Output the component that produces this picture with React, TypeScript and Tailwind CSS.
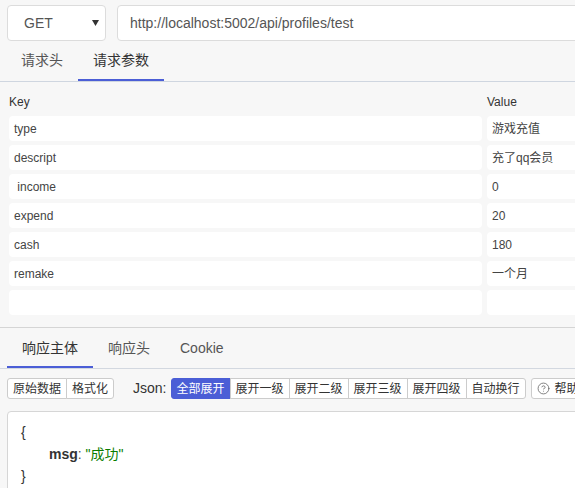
import { CircleHelp } from "lucide-react";
import clsx from "clsx";

const params = [
  { key: "type", value: "游戏充值" },
  { key: "descript", value: "充了qq会员" },
  { key: " income", value: "0" },
  { key: "expend", value: "20" },
  { key: "cash", value: "180" },
  { key: "remake", value: "一个月" },
  { key: "", value: "" },
];

const expandButtons = ["全部展开", "展开一级", "展开二级", "展开三级", "展开四级", "自动换行"];

function Tab({ label, active }: { label: string; active?: boolean }) {
  return (
    <div
      className={clsx(
        "flex items-center px-[15px] text-[14px] border-b-2",
        active ? "border-[#4b5ed6] text-[#333]" : "border-transparent text-[#555]"
      )}
    >
      {label}
    </div>
  );
}

export default function App() {
  return (
    <div
      className="w-[575px] h-[488px] overflow-hidden bg-[#f7f7f7] text-[#333]"
      style={{ fontFamily: '"Liberation Sans", Arial, "Noto Sans CJK SC", sans-serif' }}
    >
      {/* Request line */}
      <div className="flex pl-[7px] pt-[5px] w-[620px]">
        <div className="flex items-center justify-between w-[99px] h-[36px] bg-white border border-[#dcdcdc] rounded-[4px] pl-[16px] pr-[6px] text-[14px] text-[#555]">
          <span>GET</span>
          <svg width="7" height="6" viewBox="0 0 7 6">
            <path d="M0 0h7L3.5 6z" fill="#333" />
          </svg>
        </div>
        <div className="flex items-center flex-1 ml-[11px] h-[36px] bg-white border border-[#dcdcdc] rounded-[4px] pl-[12px] text-[14px] text-[#555]">
          http://localhost:5002/api/profiles/test
        </div>
      </div>

      {/* Request tabs */}
      <div className="flex h-[41px] pl-[6px] border-b border-[#cfd6e0]">
        <Tab label="请求头" />
        <Tab label="请求参数" active />
      </div>

      {/* Params table */}
      <div className="pl-[9px] pb-[12px] border-b border-[#d5d5d5] text-[12px]">
        <div className="grid grid-cols-[473px_100px] gap-x-[5px] pt-[12px] pb-[6px] leading-[16px] text-[#333]">
          <span>Key</span>
          <span>Value</span>
        </div>
        <div className="flex flex-col gap-[4px]">
          {params.map((p, i) => (
            <div key={i} className="grid grid-cols-[473px_100px] gap-x-[5px] h-[25px]">
              <div className="flex items-center bg-white rounded-[4px] pl-[5px] text-[#444] whitespace-pre">
                {p.key}
              </div>
              <div className="flex items-center bg-white rounded-[4px] pl-[5px] text-[#444]">
                {p.value}
              </div>
            </div>
          ))}
        </div>
      </div>

      {/* Response tabs */}
      <div className="flex h-[41px] pt-[2px] pl-[7px] border-b border-[#d3d8e0]">
        <Tab label="响应主体" active />
        <Tab label="响应头" />
        <Tab label="Cookie" />
      </div>

      {/* Toolbar */}
      <div className="flex items-center w-[640px] pl-[7px] mt-[9px] h-[21px] text-[12px] whitespace-nowrap">
        <div className="flex shrink-0 h-full">
          <button className="h-full px-[5px] bg-white border border-[#ccc] rounded-l-[3px] text-[#333]">原始数据</button>
          <button className="h-full px-[5px] -ml-px bg-white border border-[#ccc] rounded-r-[3px] text-[#333]">格式化</button>
        </div>
        <span className="shrink-0 ml-[19px] text-[14px] text-[#333]">Json:</span>
        <div className="flex shrink-0 h-full ml-[4px]">
          {expandButtons.map((b, i) => (
            <button
              key={b}
              className={clsx(
                "h-full px-[5px] border",
                i > 0 && "-ml-px",
                i === 0 && "rounded-l-[3px]",
                i === expandButtons.length - 1 && "rounded-r-[3px]",
                i === 0 ? "bg-[#4b5ed6] border-[#4b5ed6] text-white" : "bg-white border-[#ccc] text-[#333]"
              )}
            >
              {b}
            </button>
          ))}
        </div>
        <button className="flex shrink-0 items-center gap-[5px] h-full ml-[5px] pl-[5px] pr-[8px] bg-white border border-[#ccc] rounded-[3px] text-[#333]">
          <CircleHelp size={13} strokeWidth={1.5} className="text-[#666]" />
          帮助
        </button>
      </div>

      {/* JSON body */}
      <div className="mt-[12px] ml-[7px] w-[600px] h-[120px] bg-white border border-[#d6d6d6] rounded-[4px] pt-[9px] pl-[13px] text-[14px] leading-[22px]">
        <div>{"{"}</div>
        <div className="pl-[28px]">
          <span className="font-bold text-[#333]">msg</span>
          <span className="text-[#555]">: </span>
          <span className="text-[#0a7d00]">"成功"</span>
        </div>
        <div>{"}"}</div>
      </div>
    </div>
  );
}
